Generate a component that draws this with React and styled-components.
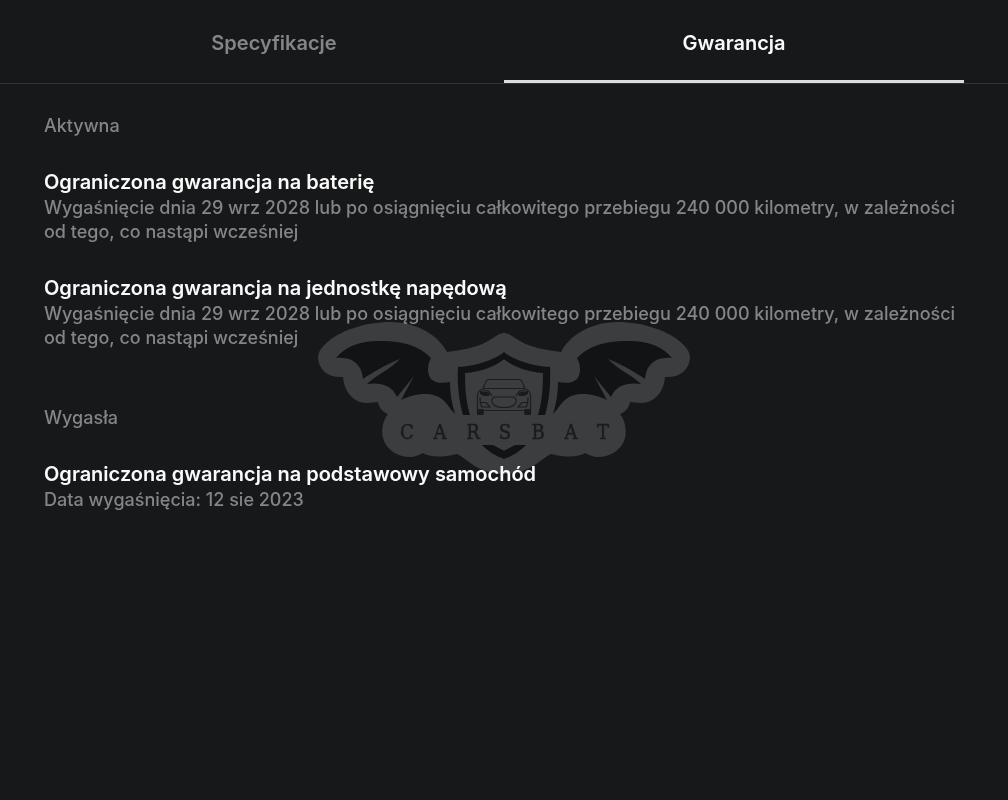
import { useState } from "react";
import styled, { createGlobalStyle } from "styled-components";

const TABS = [
  { id: "specs", label: "Specyfikacje" },
  { id: "warranty", label: "Gwarancja" },
];

const WARRANTIES = [
  {
    status: "Aktywna",
    items: [
      {
        title: "Ograniczona gwarancja na baterię",
        text: "Wygaśnięcie dnia 29 wrz 2028 lub po osiągnięciu całkowitego przebiegu 240 000 kilometry, w zależności od tego, co nastąpi wcześniej",
      },
      {
        title: "Ograniczona gwarancja na jednostkę napędową",
        text: "Wygaśnięcie dnia 29 wrz 2028 lub po osiągnięciu całkowitego przebiegu 240 000 kilometry, w zależności od tego, co nastąpi wcześniej",
      },
    ],
  },
  {
    status: "Wygasła",
    items: [
      {
        title: "Ograniczona gwarancja na podstawowy samochód",
        text: "Data wygaśnięcia: 12 sie 2023",
      },
    ],
  },
];

const LETTERS = [
  ["C", 407],
  ["A", 440],
  ["R", 473],
  ["S", 505],
  ["B", 538],
  ["A", 571],
  ["T", 603],
];

const MIRROR = "translate(1008 0) scale(-1 1)";

// left halves of the emblem, mirrored around x = 504
function Silhouette() {
  return (
    <path
      fill="#3c3d3f"
      d="M505 333C498 333 494 338 488 341C476 348 461 350 447 352C440 338 420 322 390 322C365 322 341 331 330 340C321 347 318 352 318 358C319 370 328 378 343 377C344 391 353 403 367 403C371 403 375 402 378 402C379 408 383 412 388 414C383 420 381 430 383 438C386 450 398 457 410 457C415 457 419 455 423 453C429 457 440 458 457 454C468 459 477 474 505 474Z"
    />
  );
}

function Details() {
  return (
    <>
      <path
        fill="#121315"
        d="M336 358C346 346 361 341 378 341C398 340 420 345 431 358C427 365 427 374 431 379C436 384 444 383 450 382C450 394 452 404 455 414C450 409 447 403 443 400C433 390 412 394 401 400L414 376L397 397C392 385 380 382 367 384C376 375 391 369 400 359C387 364 373 372 363 379C362 365 353 356 336 358Z"
      />
      <path
        fill="#121315"
        d="M504.500 352C492 361 475 366 458 367C457 385 459 401 463 415H470C466 402 465 388 465 373C480 372 494 367 504.500 359Z"
      />
      <path fill="#121315" d="M482 445H493L504.500 451V459C495 456 488 451 482 445Z" />
      <g fill="none" stroke="#1c1d1f" strokeWidth="1.2">
        <path d="M504.500 379.500H488C486 380 485 383 483 389C479 390 477.500 392 477.500 396V414H483V410.500H504.500" />
        <path d="M504.500 388.500H484M483 390L489 391.500L492 396M480 397C480 401 480 405 482 407H490L486 402.500H481M504.500 397H495C491 398 491 403 494 405C496 407 500 407.500 504.500 407.500" />
      </g>
      <path
        fill="#191a1c"
        d="M480 391L489 392.500L490 395C487 397 482 396 480 394ZM477 409H483.500V415H477Z"
      />
    </>
  );
}

function Emblem() {
  return (
    <svg viewBox="314 318 380 164" width="380" height="164" aria-hidden="true">
      <Silhouette />
      <g transform={MIRROR}>
        <Silhouette />
      </g>
      <Details />
      <g transform={MIRROR}>
        <Details />
      </g>
      <g
        fill="#1b1c1e"
        stroke="#1b1c1e"
        strokeWidth="0.5"
        fontFamily="'DejaVu Serif Condensed', 'DejaVu Serif', serif"
        fontSize="20"
        textAnchor="middle"
      >
        {LETTERS.map(([letter, x]) => (
          <text key={x} x={x} y="439">
            {letter}
          </text>
        ))}
      </g>
    </svg>
  );
}

export default function App() {
  const [active, setActive] = useState("warranty");

  return (
    <Page>
      <GlobalStyle />
      <Watermark>
        <Emblem />
      </Watermark>
      <Tabs role="tablist">
        {TABS.map((tab) => (
          <Tab
            key={tab.id}
            type="button"
            role="tab"
            aria-selected={active === tab.id}
            $active={active === tab.id}
            onClick={() => setActive(tab.id)}
          >
            {tab.label}
          </Tab>
        ))}
      </Tabs>
      <Content>
        {WARRANTIES.map((group) => (
          <Group key={group.status}>
            <Status>{group.status}</Status>
            {group.items.map((item) => (
              <article key={item.title}>
                <Title>{item.title}</Title>
                <Text>{item.text}</Text>
              </article>
            ))}
          </Group>
        ))}
      </Content>
    </Page>
  );
}

/* ---------------- styled ---------------- */
const GlobalStyle = createGlobalStyle`
  * {
    box-sizing: border-box;
  }

  body {
    margin: 0;
    background: #17181a;
    font-family: Inter, "Liberation Sans", sans-serif;
  }

  h2, h3, p {
    margin: 0;
  }
`;

const Page = styled.div`
  position: relative;
  z-index: 0;
  min-height: 100vh;
`;

const Watermark = styled.div`
  position: fixed;
  inset: 0;
  z-index: -1;
  display: flex;
  align-items: center;
  justify-content: center;
  pointer-events: none;
`;

const Tabs = styled.div`
  display: flex;
  height: 84px;
  padding: 0 44px;
  border-bottom: 1px solid #323335;
`;

const Tab = styled.button`
  flex: 1;
  padding: 5px 0 0;
  border: 0;
  border-bottom: 3px solid ${(p) => (p.$active ? "#dcdcdc" : "transparent")};
  background: none;
  color: ${(p) => (p.$active ? "#fafafa" : "#848585")};
  font: inherit;
  font-size: 20px;
  font-weight: 600;
  cursor: pointer;
`;

const Content = styled.main`
  display: flex;
  flex-direction: column;
  gap: 56px;
  padding: 30px 44px;
`;

const Group = styled.section`
  display: flex;
  flex-direction: column;
  gap: 30px;
`;

const Status = styled.h2`
  color: #848585;
  font-size: 18px;
  font-weight: 500;
  line-height: 24px;
`;

const Title = styled.h3`
  color: #fafafa;
  font-size: 20px;
  font-weight: 600;
  line-height: 28px;
`;

const Text = styled.p`
  color: #848585;
  font-size: 18px;
  font-weight: 500;
  line-height: 24px;
`;
